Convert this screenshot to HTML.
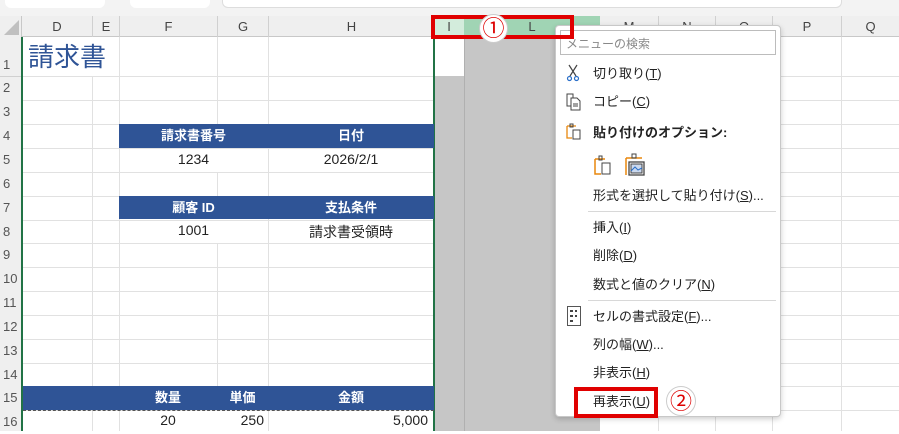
<!DOCTYPE html>
<html><head><meta charset="utf-8"><style>
*{margin:0;padding:0;box-sizing:border-box}
body{width:899px;height:431px;overflow:hidden;background:#fff;position:relative;font-family:"Liberation Sans","Noto Sans CJK JP",sans-serif;}
.a{position:absolute}
.hl{position:absolute;left:0;width:899px;height:1px;background:#e1e1e1}
.vl{position:absolute;width:1px;background:#e1e1e1}
.ch{position:absolute;top:16px;height:21px;font-size:13px;color:#444;text-align:center;line-height:21px}
.rh{position:absolute;left:0;width:22px;font-size:13px;color:#555;text-align:left;padding-left:3px;height:24px;line-height:24px}
.bar{position:absolute;background:#2f5496;color:#fff;font-weight:bold;font-size:13px;text-align:center;line-height:23px}
.c{position:absolute;font-size:14px;color:#222;text-align:center}
.mi{position:absolute;left:593px;font-size:13px;color:#222;line-height:18px}
.sep{position:absolute;left:588px;width:188px;height:1px;background:#d8d8d8}
</style></head><body>
<!-- top strip -->
<div class="a" style="left:0;top:0;width:899px;height:16px;background:#f3f3f3"></div>
<div class="a" style="left:5px;top:0;width:100px;height:8px;background:#fff;border-radius:0 0 6px 6px"></div>
<div class="a" style="left:130px;top:0;width:80px;height:8px;background:#fff;border-radius:0 0 6px 6px"></div>
<div class="a" style="left:222px;top:0;width:620px;height:8px;background:#fff;border-radius:0 0 6px 6px;border:1px solid #ddd;border-top:none"></div>
<!-- grid lines -->
<div class="hl" style="top:76px"></div><div class="hl" style="top:100px"></div><div class="hl" style="top:124px"></div><div class="hl" style="top:148px"></div><div class="hl" style="top:172px"></div><div class="hl" style="top:196px"></div><div class="hl" style="top:220px"></div><div class="hl" style="top:243px"></div><div class="hl" style="top:267px"></div><div class="hl" style="top:291px"></div><div class="hl" style="top:315px"></div><div class="hl" style="top:339px"></div><div class="hl" style="top:363px"></div><div class="hl" style="top:386px"></div><div class="hl" style="top:410px"></div>
<div class="vl" style="left:92px;top:76px;height:355px"></div>
<div class="vl" style="left:119px;top:37px;height:394px"></div>
<div class="vl" style="left:217px;top:37px;height:111px"></div>
<div class="vl" style="left:217px;top:172px;height:24px"></div>
<div class="vl" style="left:217px;top:243px;height:143px"></div>
<div class="vl" style="left:268px;top:37px;height:394px"></div>
<div class="vl" style="left:658px;top:37px;height:394px"></div>
<div class="vl" style="left:715px;top:37px;height:394px"></div>
<div class="vl" style="left:772px;top:37px;height:394px"></div>
<div class="vl" style="left:841px;top:37px;height:394px"></div>
<!-- header row -->
<div class="a" style="left:0;top:16px;width:899px;height:21px;background:#efefef;border-bottom:1px solid #c8c8c8"></div>
<div class="a" style="left:0;top:16px;width:22px;height:415px;background:#efefef;border-right:1px solid #c8c8c8"></div>
<div class="a" style="left:4px;top:20px;width:0;height:0;border-left:15px solid transparent;border-bottom:15px solid #c0c0c0"></div>
<div class="a" style="left:434px;top:16px;width:166px;height:21px;background:#a0d4b4"></div>
<div class="a" style="left:434px;top:16px;width:30px;height:21px;background:#d3ecdc"></div>
<div class="ch" style="left:22px;width:70px">D</div>
<div class="ch" style="left:92px;width:27px;border-left:1px solid #d0d0d0">E</div>
<div class="ch" style="left:119px;width:98px;border-left:1px solid #d0d0d0">F</div>
<div class="ch" style="left:217px;width:51px;border-left:1px solid #d0d0d0">G</div>
<div class="ch" style="left:268px;width:166px;border-left:1px solid #d0d0d0">H</div>
<div class="ch" style="left:434px;width:30px">I</div>
<div class="ch" style="left:464px;width:136px">L</div>
<div class="ch" style="left:600px;width:58px">M</div>
<div class="ch" style="left:658px;width:57px;border-left:1px solid #d0d0d0">N</div>
<div class="ch" style="left:715px;width:57px;border-left:1px solid #d0d0d0">O</div>
<div class="ch" style="left:772px;width:69px;border-left:1px solid #d0d0d0">P</div>
<div class="ch" style="left:841px;width:58px;border-left:1px solid #d0d0d0">Q</div>
<!-- row headers -->
<div class="rh" style="top:37px;height:39px;line-height:56px">1</div>
<div class="rh" style="top:76px">2</div><div class="rh" style="top:100px">3</div><div class="rh" style="top:124px">4</div><div class="rh" style="top:148px">5</div><div class="rh" style="top:172px">6</div><div class="rh" style="top:196px">7</div><div class="rh" style="top:220px">8</div><div class="rh" style="top:243px">9</div><div class="rh" style="top:267px">10</div><div class="rh" style="top:291px">11</div><div class="rh" style="top:315px">12</div><div class="rh" style="top:339px">13</div><div class="rh" style="top:363px">14</div><div class="rh" style="top:386px">15</div><div class="rh" style="top:410px">16</div>
<div class="a" style="left:0;top:76px;width:22px;height:1px;background:#d0d0d0"></div>
<!-- gray hidden area -->
<div class="a" style="left:435px;top:37px;width:165px;height:394px;background:#c6c6c6"></div>
<div class="a" style="left:435px;top:37px;width:29px;height:39px;background:#fff"></div>
<div class="a" style="left:464px;top:37px;width:1px;height:394px;background:#b0b0b0"></div>
<!-- selection borders -->
<div class="a" style="left:21px;top:37px;width:2px;height:394px;background:#217346"></div>
<div class="a" style="left:433px;top:37px;width:2px;height:394px;background:#217346"></div>
<!-- content -->
<div class="a" style="left:28px;top:40px;font-size:26px;color:#2f5496;line-height:34px">請求書</div>
<div class="bar" style="left:119px;top:124px;width:315px;height:24px"><span class="a" style="left:0;width:149px">請求書番号</span><span class="a" style="left:149px;width:166px">日付</span></div>
<div class="c" style="left:119px;top:151px;width:149px">1234</div>
<div class="c" style="left:268px;top:151px;width:166px">2026/2/1</div>
<div class="bar" style="left:119px;top:196px;width:315px;height:23px"><span class="a" style="left:0;width:149px">顧客 ID</span><span class="a" style="left:149px;width:166px">支払条件</span></div>
<div class="c" style="left:119px;top:222px;width:149px">1001</div>
<div class="c" style="left:268px;top:222px;width:166px">請求書受領時</div>
<div class="bar" style="left:23px;top:386px;width:411px;height:24px"><span class="a" style="left:96px;width:98px">数量</span><span class="a" style="left:194px;width:51px">単価</span><span class="a" style="left:245px;width:166px">金額</span></div>
<div class="a" style="left:23px;top:410px;width:411px;height:1px;border-top:1px dashed #555"></div>
<div class="c" style="left:119px;top:412px;width:98px">20</div>
<div class="c" style="left:217px;top:412px;width:51px;text-align:right;padding-right:4px">250</div>
<div class="c" style="left:268px;top:412px;width:166px;text-align:right;padding-right:6px">5,000</div>
<!-- menu -->
<div class="a" style="left:555px;top:25px;width:226px;height:392px;background:#fff;border:1px solid #c8c8c8;border-radius:4px;box-shadow:0 2px 6px rgba(0,0,0,.2)"></div>
<div class="a" style="left:560px;top:30px;width:216px;height:25px;border:1px solid #bcbcbc;font-size:12px;color:#888;padding:4px 5px">メニューの検索</div>
<svg class="a" style="left:566px;top:64px" width="14" height="18" viewBox="0 0 14 18"><path d="M3 1 L10 12 M11 1 L4 12" stroke="#444" stroke-width="1.2" fill="none"/><circle cx="3.5" cy="14.5" r="2" stroke="#2a6fc9" fill="none" stroke-width="1.2"/><circle cx="10.5" cy="14.5" r="2" stroke="#2a6fc9" fill="none" stroke-width="1.2"/></svg>
<div class="mi" style="top:65px">切り取り(<u>T</u>)</div>
<svg class="a" style="left:566px;top:93px" width="16" height="18" viewBox="0 0 16 18"><path d="M1 1 H7 V13 H1 Z" stroke="#444" fill="none"/><path d="M5 5 H11 L14 8 V17 H5 Z" stroke="#444" fill="#fff"/><path d="M7 11 H12 M7 13 H12" stroke="#444"/></svg>
<div class="mi" style="top:93px">コピー(<u>C</u>)</div>
<svg class="a" style="left:566px;top:122px" width="16" height="18" viewBox="0 0 16 18"><path d="M1 4 H10 M1 4 V16 H6" stroke="#e8870d" fill="none" stroke-width="1.3"/><path d="M4 2 H7 V5 H4 Z" stroke="#444" fill="none"/><rect x="7" y="8" width="7" height="9" stroke="#444" fill="#fff"/></svg>
<div class="mi" style="top:124px;font-weight:bold">貼り付けのオプション:</div>
<svg class="a" style="left:594px;top:154px" width="18" height="22" viewBox="0 0 18 22"><path d="M1 5 V20 H7 M1 5 H11" stroke="#e8870d" fill="none" stroke-width="1.5"/><path d="M5 2 H8 V6 H5 Z" stroke="#444" fill="none"/><rect x="8" y="9" width="8" height="11" stroke="#444" fill="#fff"/></svg>
<svg class="a" style="left:625px;top:153px" width="22" height="24" viewBox="0 0 22 24"><path d="M1 5 V22 M1 5 H17" stroke="#e8870d" fill="none" stroke-width="1.5"/><path d="M7 1 H11 V5 H7 Z" stroke="#444" fill="none"/><rect x="4" y="9" width="15" height="13" stroke="#444" fill="#fff" stroke-width="1.3"/><rect x="6" y="11" width="11" height="9" fill="#cbd9ee" stroke="#444"/><path d="M6 18 L10 14 L13 17 L17 15" stroke="#2a6fc9" fill="none"/></svg>
<div class="mi" style="top:187px">形式を選択して貼り付け(<u>S</u>)...</div>
<div class="sep" style="top:211px"></div>
<div class="mi" style="top:219px">挿入(<u>I</u>)</div>
<div class="mi" style="top:247px">削除(<u>D</u>)</div>
<div class="mi" style="top:276px">数式と値のクリア(<u>N</u>)</div>
<div class="sep" style="top:300px"></div>
<svg class="a" style="left:567px;top:306px" width="14" height="20" viewBox="0 0 14 20"><rect x="0.5" y="0.5" width="13" height="19" stroke="#555" fill="#fff"/><path d="M3 5 H6 M8 5 H10 M3 10 H6 M8 10 H10 M3 15 H6" stroke="#444" stroke-width="2"/></svg>
<div class="mi" style="top:308px">セルの書式設定(<u>F</u>)...</div>
<div class="mi" style="top:336px">列の幅(<u>W</u>)...</div>
<div class="mi" style="top:364px">非表示(<u>H</u>)</div>
<!-- annotations -->
<div class="a" style="left:431px;top:15px;width:143px;height:24px;border:4px solid #e00000"></div>
<div class="a" style="left:479px;top:14px;width:29px;height:29px;border-radius:50%;background:#fff;border:1px solid #ccc;text-align:center;font-size:22px;line-height:28px;color:#d00">①</div>
<div class="a" style="left:574px;top:387px;width:84px;height:31px;border:4px solid #e00000;background:#fff"></div>
<div class="mi" style="top:393px">再表示(<u>U</u>)</div>
<div class="a" style="left:666px;top:386px;width:30px;height:30px;border-radius:50%;background:#fff;border:1px solid #ccc;text-align:center;font-size:22px;line-height:29px;color:#d00">②</div>
</body></html>
